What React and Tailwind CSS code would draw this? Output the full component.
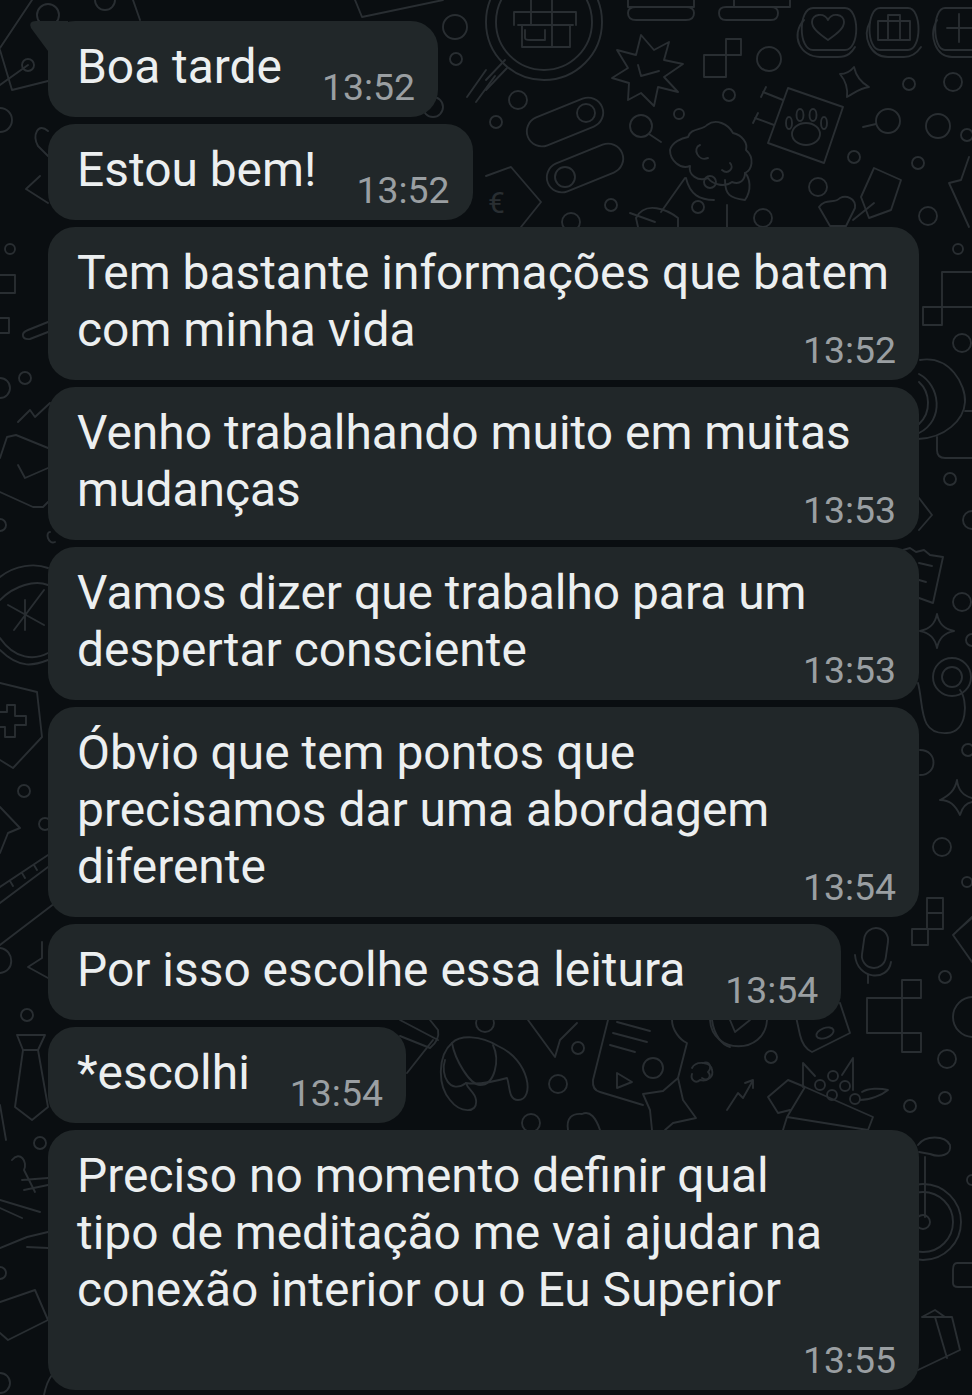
import React from "react";

const circles = [
  [28, 65, 6], [48, 15, 11], [0, 120, 12], [455, 27, 12], [456, 59, 6], [433, 107, 10], [105, 0, 10],
  [518, 100, 9], [496, 122, 6], [679, 114, 5], [729, 95, 6], [649, 165, 6], [611, 205, 6], [571, 222, 9],
  [698, 207, 6], [710, 182, 6], [777, 175, 6], [763, 218, 9], [818, 187, 9], [854, 157, 6], [918, 163, 6],
  [928, 216, 9], [938, 126, 12], [967, 135, 6], [909, 84, 6], [953, 82, 9], [769, 59, 12], [972, 1180, 5],
  [958, 249, 5], [962, 343, 9], [950, 479, 6], [972, 520, 9], [962, 602, 9], [972, 640, 6], [952, 677, 19],
  [952, 677, 10], [968, 750, 6], [942, 847, 9], [967, 882, 5], [945, 977, 6], [973, 1017, 20], [947, 1059, 9],
  [945, 1098, 6], [910, 1106, 6], [771, 1057, 6], [10, 249, 5], [25, 378, 6], [0, 388, 10], [0, 525, 6],
  [24, 791, 6], [45, 824, 6], [27, 1015, 6], [40, 1143, 6], [0, 1273, 6], [0, 1383, 10],
  [485, 1023, 9], [578, 1048, 6], [558, 1084, 9], [531, 1123, 9], [653, 1068, 10], [923, 1222, 7],
  [544, 22, 48], [544, 22, 58], [888, 121, 12], [641, 126, 11], [586, 113, 9], [565, 177, 10], [923, 1222, 38],
  [923, 1222, 30],
];

const paths = [
  // top left
  "M32 0 L0 48", "M0 50 L12 90 L48 81", "M0 85 L28 65", "M133 0 L140 20", "M355 0 L362 17 L443 0",
  "M467 97 L486 70 M476 102 L495 76", "M26 189 L40 176 M26 189 L48 203", "M48 131 C38 122 32 135 38 146 L48 156",
  // magnifier and shop
  "M505 60 L486 80 M507 68 L486 90", "M518 25 L573 25 M514 12 L576 12 L576 25 M514 12 L514 25",
  "M522 25 L522 47 L570 47 L570 25 M531 0 L531 25 M552 0 L552 25 M552 25 L552 47 M525 30 L525 38 Q525 40 530 40 L545 40 L545 30",
  "M628 0 L628 7 L694 7 L694 0 M636 7 Q628 7 628 13 Q628 20 636 20 L686 20 Q694 20 694 13 Q694 7 686 7",
  "M734 0 L734 7 L790 7 L790 0 M726 7 Q719 7 719 13 Q719 20 726 20 L771 20 Q778 20 778 13 Q778 7 771 7 Z",
  "M641 35 L654 50 L669 42 L664 60 L683 64 L664 77 L678 92 L658 87 L654 106 L641 93 L628 100 L629 83 L612 78 L628 68 L617 50 L636 55 Z",
  "M638 65 L641 76 L659 71", "M704 55 H726 V77 H704 Z M726 39 H741 V55 H726 Z", "M649 134 L661 142",
  // bubbles with heart, case and plus
  "M813 8 H845 C860 8 860 50 845 50 H813 C798 50 798 8 813 8 Z",
  "M804 20 C790 35 800 57 820 57 H838 C848 57 852 52 855 47",
  "M828 40 C818 33 812 28 812 22 C812 14 824 12 828 20 C832 12 844 14 844 22 C844 28 838 33 828 40 Z",
  "M880 8 H908 C922 8 922 50 908 50 H880 C866 50 866 8 880 8 Z", "M870 22 C862 36 870 57 888 57 H904 C912 57 917 53 921 47",
  "M878 21 H910 V40 H878 Z M888 21 V15 H900 V21 M888 21 V40 M900 21 V40",
  "M945 8 H972 M945 50 H972 M945 8 C932 8 932 50 945 50 M937 20 C928 36 936 57 952 57 H972", "M947 28 H972 M959 14 V42",
  // paw frame and four point star
  "M788 88 L843 107 L824 163 L768 143 Z", "M766 87 L761 97 M763 92 L783 100 M758 113 L753 123 M755 118 L774 125",
  "M854 67 C856 76 860 82 869 87 C860 88 856 92 847 97 C848 88 845 80 840 74 C845 74 850 72 854 67 Z",
  "M863 127 L876 124",
  // poodle
  "M688 137 C690 128 703 130 707 125 C716 118 728 124 733 133 C742 135 748 143 746 150 C755 158 752 170 745 173 C745 180 740 185 732 182 C724 188 712 184 708 178 C698 182 688 175 690 166 C680 170 670 160 670 150 C672 142 682 138 688 137 Z",
  "M700 145 C692 148 698 162 708 158 M730 163 C735 168 728 175 722 170",
  "M685 178 L661 212 M686 178 C690 195 700 200 714 200 M725 180 C725 195 730 198 745 200 C752 190 750 178 745 173 M727 205 L727 227",
  "M630 213 L655 222 M638 227 L636 218 C645 200 668 210 678 218 L678 227",
  // tag, flower
  "M486 176 L511 167 L541 202 L521 227", "M874 168 L901 180 L891 210 L869 218 L861 197 Z", "M874 203 L853 220",
  "M819 207 C825 198 835 204 840 198 C846 195 856 198 855 208 L846 226 L830 226 Z",
  "M949 183 L969 227 M969 157 L961 180 L949 183",
  // right column
  "M923 307 H942 V325 H923 Z M942 272 H972 M942 272 V307 H972",
  "M920 360 C950 355 966 385 965 402 C964 420 945 438 918 439", "M965 411 H972", "M937 437 V450 Q937 458 945 458 H972",
  "M919 374 C940 385 945 420 919 433 M919 382 C930 392 932 412 919 424",
  "M919 498 L932 515 L919 530", "M903 550 L910 548 L916 552 L924 550 L930 555 L943 557 L933 603 L919 598 M919 563 L932 566 M919 580 L926 582",
  "M937 614 C939 624 944 629 954 631 C944 633 939 638 937 648 C935 638 930 633 920 631 C930 629 935 624 937 614 Z",
  "M918 683 C924 705 918 735 947 733 C968 732 968 700 960 690", "M920 750 C938 750 938 775 920 775",
  "M957 780 C958 790 964 796 972 798 M940 800 C950 800 955 805 960 815 C962 808 966 803 972 802 M940 800 C950 795 955 790 957 780",
  "M927 898 H943 V929 H927 Z M927 913 H943 M912 929 H928 V945 H912 Z", "M972 917 L953 935 L972 962 M957 931 L972 918",
  "M855 955 C857 980 888 982 891 962 M868 975 V983", "M902 980 H921 V998 H902 Z M867 998 H902 V1033 H867 Z M902 1033 H921 V1052 H902 Z",
  "M793 1003 L800 1035 Q803 1048 812 1052 L850 1033 L840 1003", "M710 1020 C712 1055 765 1055 767 1020 M730 1020 L735 1032 L750 1020",
  "M703 1063 C710 1060 712 1068 708 1072 C712 1076 708 1082 702 1078",
  "M727 1110 L738 1093 L743 1098 L752 1082 M745 1083 L753 1080 L753 1088",
  "M768 1097 L788 1080 L805 1087 L873 1117 L868 1130 M805 1087 L787 1117 L783 1130 M787 1117 L868 1130 M768 1097 L778 1113 L790 1110",
  "M803 1087 L803 1063 L815 1076 M853 1090 L853 1058 L842 1075 M860 1100 C870 1100 882 1095 888 1090 C880 1088 868 1088 862 1092",
  "M815 1085 a5 5 0 1 0 10 0 a5 5 0 1 0 -10 0 M828 1076 a5 5 0 1 0 10 0 a5 5 0 1 0 -10 0 M840 1086 a5 5 0 1 0 10 0 a5 5 0 1 0 -10 0 M827 1095 a5 5 0 1 0 10 0 a5 5 0 1 0 -10 0 M850 1099 a5 5 0 1 0 10 0 a5 5 0 1 0 -10 0",
  "M918 1145 C925 1135 945 1135 950 1145 C952 1155 940 1158 930 1154 L919 1152 M925 1157 V1217",
  "M972 1263 H957 Q953 1263 953 1270 V1283 Q953 1287 958 1287 H972", "M922 1317 L952 1317 L960 1350 L918 1370 M935 1317 L947 1358 M922 1317 L935 1310 L945 1317",
  // left column
  "M0 275 H15 V293 H0 M0 318 H9 V333 H0", "M48 322 L28 330 C20 333 22 340 30 339 L48 332",
  "M18 422 L30 410 L35 417 L50 403", "M0 458 L7 437 L16 435 L48 448", "M18 465 L25 478 L48 468", "M0 492 L33 507 L43 507 L48 502",
  "M48 464 M50 532 C45 532 48 545 55 542", "M0 577 C15 565 35 563 48 568 M0 600 C15 585 35 580 48 585",
  "M25 600 L25 630 M14 630 L44 590 M8 605 L44 625", "M0 638 C15 660 35 660 48 653 M0 650 C20 670 35 665 48 660",
  "M0 683 L37 692 L42 737 L13 768 L0 760", "M0 712 H7 V705 H15 V716 H26 V725 H15 V737 H5 V727 H0",
  "M0 807 L20 828 L8 833 L0 853", "M0 887 L48 855 M0 903 L48 867 M10 881 L13 886 M22 873 L25 878 M34 865 L37 870",
  "M0 945 L55 903", "M28 967 L42 958 L42 942 M28 967 L48 978", "M0 948 C15 950 15 972 0 973",
  "M17 1035 H45 L38 1050 H23 Z M23 1050 L15 1107 L32 1120 L48 1107 L38 1050", "M0 1105 L6 1140",
  "M12 1160 C20 1150 28 1162 24 1170 L35 1192 M22 1180 L48 1178 M24 1190 L48 1185", "M0 1200 L40 1212 M0 1208 L22 1218",
  "M0 1248 L27 1237 L48 1232 M27 1247 L48 1248", "M0 1302 L35 1290 L48 1320 L8 1340 L0 1333", "M44 1395 C46 1385 48 1380 52 1375",
  // below the short bubbles
  "M400 1020 L438 1040 M400 1036 L430 1048 Q440 1040 438 1030 L430 1020 M407 1073 L433 1040",
  "M452 1043 C438 1055 437 1085 450 1100 C460 1113 478 1114 476 1100 C475 1092 468 1090 466 1083 C480 1085 500 1080 507 1078 C510 1085 508 1100 518 1100 C535 1100 530 1060 498 1046 C480 1035 460 1035 452 1043 Z",
  "M452 1043 C455 1060 470 1085 480 1085 C495 1085 500 1060 493 1045 M445 1060 C440 1075 450 1095 466 1083",
  "M528 1020 L555 1057 L560 1040 L577 1023", "M608 1020 L593 1080 Q592 1090 600 1092 L643 1105",
  "M617 1022 L650 1031 M613 1033 L647 1042 M610 1045 L635 1052", "M617 1073 L632 1082 L617 1088 Z",
  "M672 1020 C672 1030 680 1040 687 1043 L678 1078", "M643 1094 L663 1091 L678 1078 L683 1100 L696 1118 L673 1123 L665 1130 M643 1094 L650 1110 L652 1130",
  "M692 1068 C696 1060 712 1062 712 1070 C714 1076 708 1082 700 1080 C696 1084 690 1080 692 1074",
  "M712 1020 C714 1035 722 1045 730 1047", "M568 1130 C566 1118 572 1113 582 1114 C590 1110 596 1118 600 1130",
];

const messages = [
  { lines: ["Boa tarde"], time: "13:52" },
  { lines: ["Estou bem!"], time: "13:52" },
  { lines: ["Tem bastante informações que batem", "com minha vida"], time: "13:52" },
  { lines: ["Venho trabalhando muito em muitas", "mudanças"], time: "13:53" },
  { lines: ["Vamos dizer que trabalho para um", "despertar consciente"], time: "13:53" },
  { lines: ["Óbvio que tem pontos que", "precisamos dar uma abordagem", "diferente"], time: "13:54" },
  { lines: ["Por isso escolhe essa leitura"], time: "13:54" },
  { lines: ["*escolhi"], time: "13:54" },
  {
    lines: ["Preciso no momento definir qual", "tipo de meditação me vai ajudar na", "conexão interior ou o Eu Superior"],
    time: "13:55",
    spaced: true,
  },
];

const Doodles = () => (
  <svg
    className="absolute inset-0"
    width="972"
    height="1395"
    viewBox="0 0 972 1395"
    fill="none"
    stroke="#292e32"
    strokeWidth="1.9"
    strokeLinecap="round"
    strokeLinejoin="round"
  >
    {circles.map(([cx, cy, r], i) => (
      <circle key={i} cx={cx} cy={cy} r={r} />
    ))}
    {paths.map((d, i) => (
      <path key={i} d={d} />
    ))}
    <rect x="525" y="107" width="80" height="30" rx="15" transform="rotate(-22 565 122)" />
    <rect x="545" y="153" width="80" height="30" rx="15" transform="rotate(-22 585 168)" />
    <rect x="863" y="928" width="24" height="40" rx="12" transform="rotate(8 875 948)" />
    <ellipse cx="806" cy="134" rx="14" ry="11" />
    <ellipse cx="789" cy="123" rx="3" ry="6" />
    <ellipse cx="800" cy="115" rx="3.5" ry="6" />
    <ellipse cx="813" cy="115" rx="3.5" ry="6" />
    <ellipse cx="824" cy="123" rx="3" ry="6" />
    <ellipse cx="825" cy="1033" rx="9" ry="5" transform="rotate(-20 825 1033)" />
    <text x="488" y="213" fill="#292e32" stroke="none" fontSize="30" fontFamily="Roboto, sans-serif">
      €
    </text>
  </svg>
);

const Bubble = ({ lines, time, spaced }) => {
  if (lines.length === 1) {
    return (
      <div className="flex self-start h-[96px] rounded-[27px] bg-[#212729] pl-[29px] pr-[23px]">
        <p className="pt-[18px] text-[47.9px] leading-[57px] text-[#eceff0] whitespace-nowrap">{lines[0]}</p>
        <span className="pt-[48px] pl-[40px] text-[37.4px] leading-[36px] text-[#9a9fa2] whitespace-nowrap">{time}</span>
      </div>
    );
  }
  return (
    <div className="flex flex-col w-[871px] rounded-[27px] bg-[#212729] pl-[29px] pr-[23px] pt-[18px] pb-[12px] ">
      <div className="text-[47.9px] leading-[57px] text-[#eceff0] whitespace-nowrap">
        {lines.map((line) => (
          <p key={line}>{line}</p>
        ))}
      </div>
      <span className={`self-end text-[37.4px] leading-[36px] text-[#9a9fa2] ${spaced ? "mt-[23px]" : "-mt-[27px]"}`}>
        {time}
      </span>
    </div>
  );
};

export default function App() {
  return (
    <div className="relative h-[1395px] w-[972px] overflow-hidden bg-[#0a0e11] font-['Roboto',sans-serif]">
      <Doodles />
      <div className="relative flex flex-col gap-[7px] pl-[48px] pt-[21px]">
        <svg className="absolute left-[28px] top-[21px]" width="40" height="34" viewBox="0 0 40 34">
          <path d="M20 30 L3 7 Q0 0 8 0 L40 0 L40 30 Z" fill="#212729" />
        </svg>
        {messages.map((m, i) => (
          <Bubble key={i} {...m} />
        ))}
      </div>
    </div>
  );
}
